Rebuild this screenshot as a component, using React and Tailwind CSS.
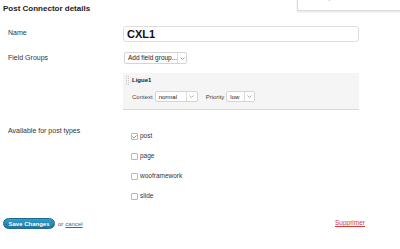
import { Check } from 'lucide-react';

const Select = ({ label, width, arrowX, height = 'h-[11px]', text = 'text-[6px]' }) => {
  return (
    <div className={`flex ${height} ${width} border border-[#d4d4d4] rounded-[2px] bg-white`}>
      <div className={`flex-1 flex items-center pl-[3px] ${text} leading-none text-[#222] whitespace-nowrap overflow-hidden`}>
        {label}
      </div>
      <div className={`${arrowX} flex items-center justify-center border-l border-[#dcdcdc]`}>
        <svg width="5" height="3" viewBox="0 0 5 3">
          <path d="M0.5 0.5 L2.5 2.5 L4.5 0.5" fill="none" stroke="#999" strokeWidth="0.8" />
        </svg>
      </div>
    </div>
  );
};

const PostType = ({ name, checked }) => (
  <div className="flex items-center h-[7px]">
    <div className="w-[7px] h-[7px] border border-[#b8b8b8] rounded-[1px] bg-white flex items-center justify-center">
      {checked && <Check size={6} strokeWidth={4} className="text-[#4a9a2a]" />}
    </div>
    <span className="ml-[2px] text-[6.5px] leading-none text-[#333]">{name}</span>
  </div>
);

const App = () => {
  const postTypes = [
    { name: 'post', checked: true },
    { name: 'page', checked: false },
    { name: 'wooframework', checked: false },
    { name: 'slide', checked: false }
  ];

  return (
    <div className="relative w-[400px] h-[249px] overflow-hidden bg-white text-[#333] font-['Liberation_Sans',Arial,sans-serif]">
      {/* screen options tab */}
      <div className="absolute left-[297px] top-[-12px] w-[120px] h-[23px] border border-[#dcdcdc] bg-white shadow-[0_1px_2px_rgba(0,0,0,0.12)]">
        <span className="absolute left-[25px] top-[4px] text-[7px] leading-[8px] text-[#8fa4bd]">Options</span>
      </div>

      <h2 className="pl-[3px] pt-[4px] text-[8px] leading-[10px] font-bold text-[#222]">Post Connector details</h2>

      {/* Name */}
      <div className="mt-[12px] flex">
        <div className="w-[123px] pl-[8px] pt-[2px] text-[7px] leading-[9px]">Name</div>
        <div className="w-[236px] h-[16px] border border-[#dfdfdf] rounded-[3px] pl-[3px] flex items-center text-[11px] font-bold text-[#111] leading-none">
          CXL1
        </div>
      </div>

      {/* Field Groups */}
      <div className="mt-[10px] flex">
        <div className="w-[123px] pl-[8px] pt-[1px] text-[7px] leading-[9px]">Field Groups</div>
        <div className="flex flex-col">
          <div className="pl-[1px]">
            <Select label="Add field group..." width="w-[63px]" arrowX="w-[9px]" height="h-[12px]" text="text-[6.5px]" />
          </div>
          <div className="mt-[9px] w-[236px] h-[37px] bg-[#f5f5f5] border-b border-[#dadada] pt-[3px] pl-[3px]">
            <div className="flex items-start h-[10px]">
              <div className="flex gap-[1px]">
                <div className="w-[1px] h-[10px] bg-[repeating-linear-gradient(to_bottom,#c4c4c4_0px,#c4c4c4_1px,transparent_1px,transparent_2px)]" />
                <div className="w-[1px] h-[10px] bg-[repeating-linear-gradient(to_bottom,#c4c4c4_0px,#c4c4c4_1px,transparent_1px,transparent_2px)]" />
              </div>
              <span className="ml-[3px] text-[6px] leading-[8px] font-bold text-[#222]">Ligue1</span>
            </div>
            <div className="mt-[5px] pl-[6px] flex items-center text-[6px] leading-none text-[#444]">
              <span>Context</span>
              <div className="ml-[2px]">
                <Select label="normal" width="w-[43px]" arrowX="w-[11px]" />
              </div>
              <span className="ml-[8px]">Priority</span>
              <div className="ml-[2px]">
                <Select label="low" width="w-[29px]" arrowX="w-[10px]" />
              </div>
            </div>
          </div>
        </div>
      </div>

      {/* Available for post types */}
      <div className="mt-[16px] flex">
        <div className="w-[123px] pl-[8px] text-[7px] leading-[9px]">Available for post types</div>
        <div className="pl-[8px] pt-[7px] flex flex-col gap-[13px]">
          {postTypes.map((pt) => (
            <PostType key={pt.name} name={pt.name} checked={pt.checked} />
          ))}
        </div>
      </div>

      {/* Footer */}
      <div className="mt-[18px] w-[365px] pl-[3px] flex items-center justify-between">
        <div className="flex items-center text-[6px] leading-none">
          <button className="w-[52px] h-[11px] rounded-full bg-gradient-to-b from-[#2e9fd2] to-[#21759b] border border-[#1e6a8d] text-white font-bold text-[6px] leading-none flex items-center justify-center">
            Save Changes
          </button>
          <span className="ml-[3px] text-[#555]">or</span>
          <a href="#" className="ml-[2px] text-[#21759b] underline">cancel</a>
        </div>
        <a href="#" className="text-[6.5px] leading-none text-[#d03c3c] underline">Supprimer</a>
      </div>
    </div>
  );
};

export default App;
